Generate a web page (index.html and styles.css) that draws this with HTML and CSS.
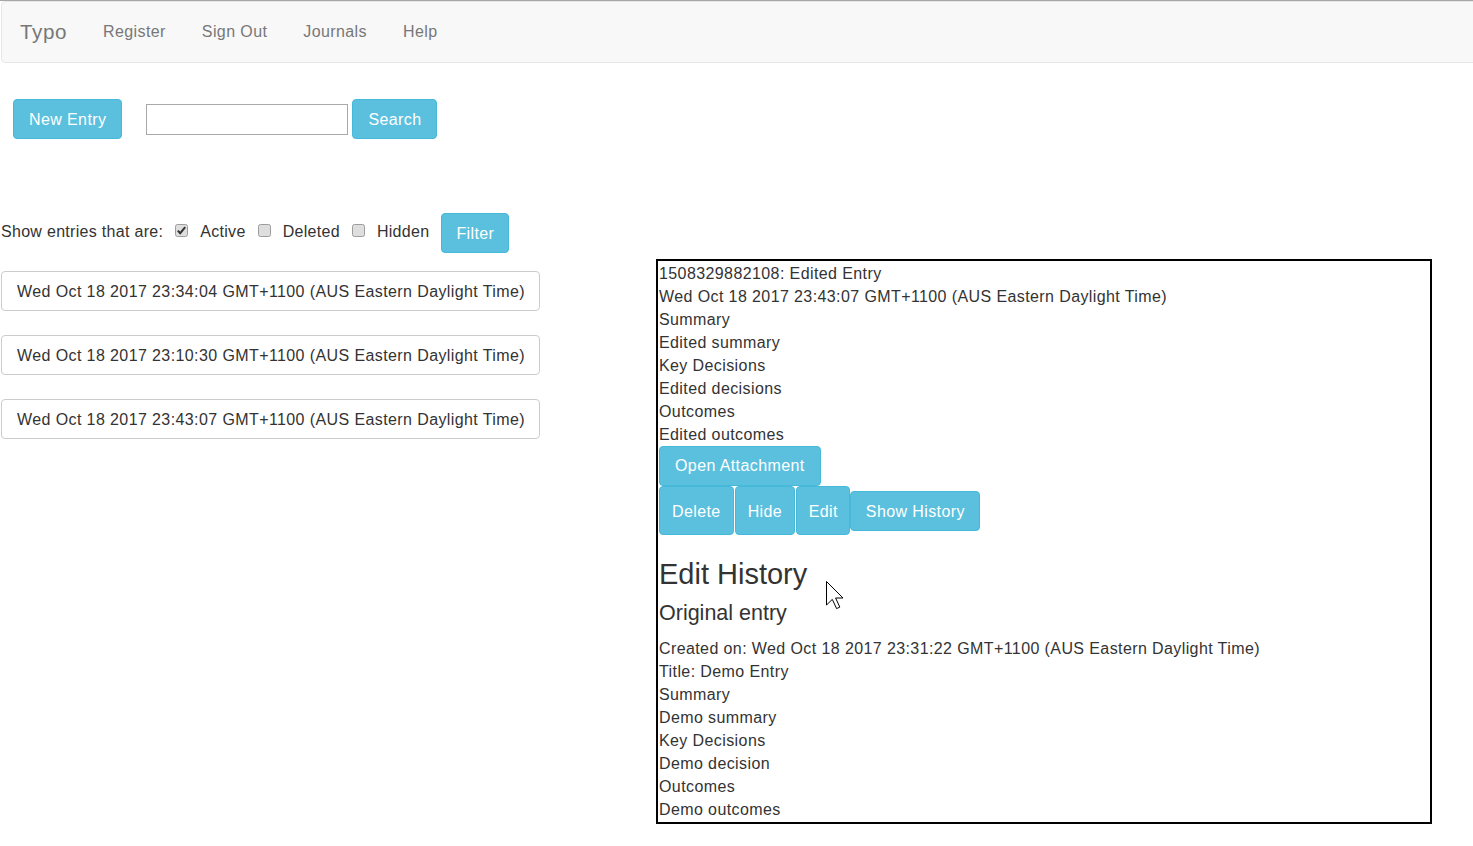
FILE: index.html
```html
<!DOCTYPE html>
<html lang="en">
<head>
<meta charset="utf-8">
<title>Typo</title>
<link rel="stylesheet" href="styles.css">
</head>
<body>
<nav class="navbar">
  <a class="brand" href="#">Typo</a>
  <a class="nav-link" href="#">Register</a>
  <a class="nav-link" href="#">Sign Out</a>
  <a class="nav-link" href="#">Journals</a>
  <a class="nav-link" href="#">Help</a>
</nav>

<div class="toolbar">
  <button class="btn btn-info btn-new">New Entry</button>
  <div class="search">
    <input class="search-input" type="text">
    <button class="btn btn-info btn-search">Search</button>
  </div>
</div>

<div class="filter-row">
  <span class="ftext">Show entries that are:</span>
  <span class="cb"><svg width="13" height="13" viewBox="0 0 13 13"><rect x="0.5" y="0.5" width="12" height="12" rx="2" fill="#dedede" stroke="#9d9d9d"/><path d="M2.8 6.6 L5.2 9.2 L10.2 3.2" fill="none" stroke="#333" stroke-width="2"/></svg></span>
  <span class="ftext">Active</span>
  <span class="cb"><svg width="13" height="13" viewBox="0 0 13 13"><rect x="0.5" y="0.5" width="12" height="12" rx="2" fill="#dedede" stroke="#9d9d9d"/></svg></span>
  <span class="ftext">Deleted</span>
  <span class="cb"><svg width="13" height="13" viewBox="0 0 13 13"><rect x="0.5" y="0.5" width="12" height="12" rx="2" fill="#dedede" stroke="#9d9d9d"/></svg></span>
  <span class="ftext">Hidden</span>
  <button class="btn btn-info filter-btn">Filter</button>
</div>

<div class="main">
  <div class="entries">
    <button class="btn btn-default entry">Wed Oct 18 2017 23:34:04 GMT+1100 (AUS Eastern Daylight Time)</button>
    <button class="btn btn-default entry">Wed Oct 18 2017 23:10:30 GMT+1100 (AUS Eastern Daylight Time)</button>
    <button class="btn btn-default entry">Wed Oct 18 2017 23:43:07 GMT+1100 (AUS Eastern Daylight Time)</button>
  </div>

  <div class="panel">
    <div>1508329882108: Edited Entry</div>
    <div>Wed Oct 18 2017 23:43:07 GMT+1100 (AUS Eastern Daylight Time)</div>
    <div>Summary</div>
    <div>Edited summary</div>
    <div>Key Decisions</div>
    <div>Edited decisions</div>
    <div>Outcomes</div>
    <div>Edited outcomes</div>
    <div class="attach-row"><button class="btn btn-info btn-attach">Open Attachment</button></div>
    <div class="action-row">
      <button class="btn btn-info btn-tall">Delete</button>
      <button class="btn btn-info btn-tall">Hide</button>
      <button class="btn btn-info btn-tall btn-edit">Edit</button>
      <button class="btn btn-info btn-hist">Show History</button>
    </div>
    <h2 class="h-history">Edit History</h2>
    <h4 class="h-orig">Original entry</h4>
    <div>Created on: Wed Oct 18 2017 23:31:22 GMT+1100 (AUS Eastern Daylight Time)</div>
    <div>Title: Demo Entry</div>
    <div>Summary</div>
    <div>Demo summary</div>
    <div>Key Decisions</div>
    <div>Demo decision</div>
    <div>Outcomes</div>
    <div>Demo outcomes</div>
  </div>
</div>

<svg class="cursor" width="19" height="29" viewBox="0 0 19 29"><path d="M0.5 0.5 L0.5 24 L6.3 18.4 L10.6 27.6 L13.8 26.1 L9.6 17 L17 17 Z" fill="#fff" stroke="#000" stroke-width="1" stroke-linejoin="miter"/></svg>
</body>
</html>
```

FILE: styles.css
```css
html, body {
  margin: 0;
  padding: 0;
}
body {
  position: relative;
  border-top: 1px solid #a6a6a6;
  padding-left: 1px;
  overflow-x: hidden;
  background: #fff;
  color: #333;
  font-family: "Liberation Sans", Arial, sans-serif;
  font-size: 16px;
  line-height: 23px;
  letter-spacing: 0.4px;
  min-height: 845px;
  box-sizing: border-box;
}

.navbar {
  display: flex;
  align-items: center;
  gap: 36px;
  height: 62px;
  box-sizing: border-box;
  padding: 0 19px 2px 18px;
  margin-right: -20px;
  background: #f8f8f8;
  border: 1px solid #e7e7e7;
  border-radius: 4px;
}
.brand {
  color: #777;
  font-size: 20.6px;
  letter-spacing: 0.6px;
  text-decoration: none;
}
.nav-link {
  color: #777;
  font-size: 16px;
  text-decoration: none;
}

.btn {
  font-family: inherit;
  font-size: 16px;
  line-height: 22px;
  letter-spacing: 0.4px;
  padding: 9px 15px 7px 15px;
  border: 1px solid transparent;
  border-radius: 4px;
  cursor: pointer;
  white-space: nowrap;
  margin: 0;
}
.btn-info {
  background: #5bc0de;
  border-color: #46b8da;
  color: #fff;
}
.btn-default {
  background: #fff;
  border-color: #ccc;
  color: #333;
}

.toolbar {
  display: flex;
  align-items: center;
  gap: 24px;
  margin-top: 36px;
  padding-left: 12px;
}
.search {
  display: flex;
  align-items: center;
  gap: 4px;
}
.btn-search {
  padding-right: 14px;
}
.search-input {
  box-sizing: border-box;
  width: 202px;
  height: 31px;
  border: 1px solid #a9a9a9;
  margin: 0;
  padding: 2px 4px;
  font-family: inherit;
  font-size: 16px;
}

.filter-row {
  display: flex;
  align-items: center;
  gap: 12px;
  margin-top: 74px;
}
.ftext {
  margin-bottom: 3px;
  letter-spacing: 0.3px;
}
.cb {
  display: flex;
  width: 13px;
  height: 13px;
  margin-bottom: 6px;
}
.filter-btn {
  padding-left: 14px;
  padding-right: 14px;
}

.main {
  display: flex;
  align-items: flex-start;
  margin-top: 6px;
}
.entries {
  width: 655px;
  flex: none;
  display: flex;
  flex-direction: column;
  align-items: flex-start;
  gap: 24px;
  padding-top: 12px;
}
.entry {
  text-align: left;
  padding-right: 14px;
}

.panel {
  width: 776px;
  box-sizing: border-box;
  border: 2px solid #000;
  padding: 1px 0 1px 1px;
  flex: none;
}
.attach-row {
  display: flex;
}
.btn-attach {
  padding-top: 8px;
  padding-bottom: 8px;
}
.action-row {
  display: flex;
  align-items: center;
  gap: 1px;
}
.btn-tall {
  padding: 13px 12px 11px 12px;
  line-height: 23px;
}
.btn-edit {
  padding-left: 11.5px;
  padding-right: 11.5px;
}
.btn-hist {
  padding-left: 14.5px;
  padding-right: 14.5px;
  margin-left: -1px;
  margin-top: 1px;
}
.h-history {
  font-size: 29px;
  font-weight: normal;
  letter-spacing: 0;
  line-height: 1.1;
  margin: 24px 0 9px 0;
}
.h-orig {
  font-size: 21.5px;
  font-weight: normal;
  letter-spacing: 0;
  line-height: 1.1;
  margin: 11px 0 11px 0;
}

.cursor {
  position: absolute;
  left: 826px;
  top: 580px;
}
```
